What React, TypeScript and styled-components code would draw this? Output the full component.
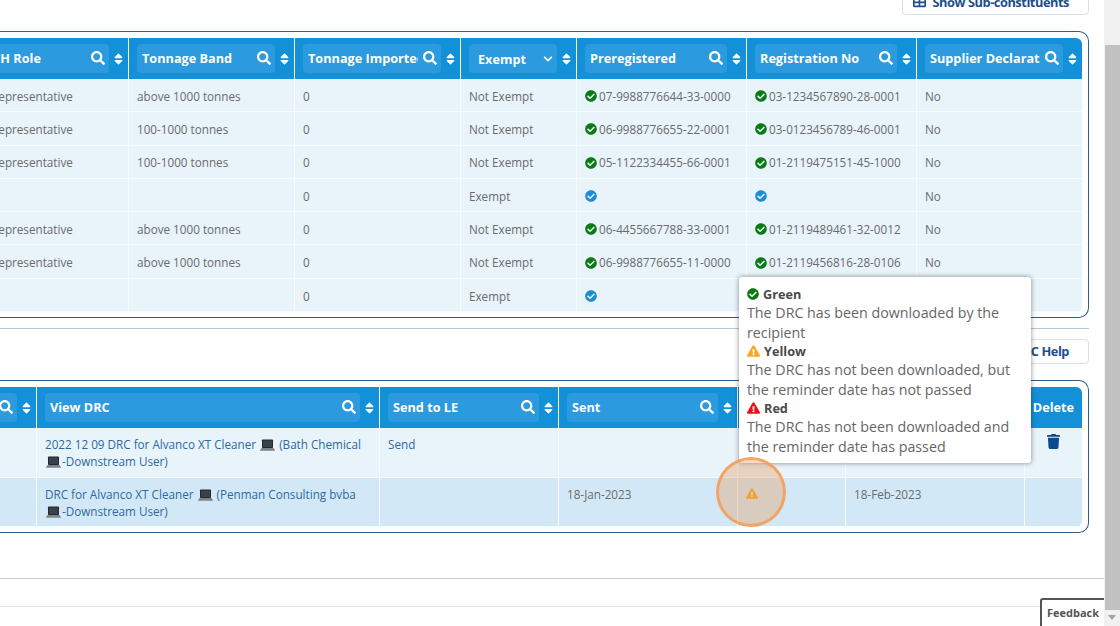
import React from "react"
import styled, { createGlobalStyle } from "styled-components"
import {
  FaCheckCircle,
  FaChevronDown,
  FaExclamationTriangle,
  FaQuestionCircle,
  FaSearch,
  FaSort,
  FaTable,
  FaTrash,
} from "react-icons/fa"

const GlobalStyle = createGlobalStyle`
  html, body {
    margin: 0;
    padding: 0;
    height: 100%;
    overflow: hidden;
    background: #fff;
    font-family: "Open Sans", "Liberation Sans", sans-serif;
  }
`

const Page = styled.div`
  position: relative;
  display: flex;
  width: 1120px;
  height: 626px;
  overflow: hidden;
`
const Content = styled.main`
  flex: 1;
  min-width: 0;
  display: flex;
  flex-direction: column;
  align-items: flex-end;
`
const ActionRow = styled.div`
  align-self: stretch;
  display: flex;
  justify-content: flex-end;
  padding-right: 15px;
`
const ActionButton = styled.button<{ $top: number }>`
  display: flex;
  align-items: center;
  gap: 7px;
  box-sizing: border-box;
  height: 25px;
  margin-top: ${(p) => p.$top}px;
  padding: 0 19px 2px 10px;
  background: #fff;
  border: 1px solid #d6e0e8;
  border-radius: 4px;
  color: #1c4f8c;
  font-family: inherit;
  font-size: 12.8px;
  font-weight: 700;
  letter-spacing: -0.45px;
  white-space: nowrap;
`
const Panel = styled.section<{ $top: number }>`
  margin: ${(p) => p.$top}px 15px 0 0;
  padding: 6px 6px 5px 0;
  border: 1px solid #2c5f8a;
  border-left: 0;
  border-radius: 0 10px 10px 0;
`
const Table = styled.div`
  border-radius: 0 6px 6px 0;
  overflow: hidden;
`
const Row = styled.div<{ $columns: string; $height: number; $shade?: boolean }>`
  display: grid;
  grid-template-columns: ${(p) => p.$columns};
  height: ${(p) => p.$height}px;
  background: ${(p) => (p.$shade ? "#d3e8f6" : "#e8f3fa")};
  box-shadow: inset 0 -1px 0 #f6fbfe;
`
const HeaderRow = styled(Row)`
  background: #1290d8;
  box-shadow: none;
`
const HeaderCell = styled.div`
  display: flex;
  align-items: center;
  gap: 5px;
  padding: 0 5px 0 8px;
  border-left: 1px solid #fff;
  min-width: 0;
  &:first-child {
    border-left: 0;
  }
`
const Filter = styled.div<{ $select?: boolean }>`
  flex: 1;
  min-width: 0;
  display: flex;
  align-items: center;
  box-sizing: border-box;
  height: 29px;
  padding: ${(p) => (p.$select ? "0 4px 0 9px" : "0 4px 2px 5px")};
  background: #2b9ade;
  border-radius: 4px;
  color: #fff;
  font-size: 12.7px;
  font-weight: 700;
`
const FilterLabel = styled.span`
  flex: 1;
  min-width: 0;
  margin-right: 5px;
  overflow: hidden;
  white-space: nowrap;
`
const SortIcon = styled(FaSort)`
  flex: none;
  width: 9px;
  height: 14px;
  color: #fff;
`
const SearchIcon = styled(FaSearch)`
  flex: none;
  width: 14px;
  height: 14px;
  color: #fff;
`
const Chevron = styled(FaChevronDown)`
  flex: none;
  width: 10px;
  height: 10px;
  color: #fff;
`
const DeleteTitle = styled.div`
  display: flex;
  align-items: center;
  justify-content: center;
  padding-bottom: 2px;
  border-left: 1px solid #fff;
  color: #fff;
  font-size: 12.7px;
  font-weight: 700;
`
const Cell = styled.div<{ $tall?: boolean }>`
  display: flex;
  align-items: ${(p) => (p.$tall ? "flex-start" : "center")};
  gap: 2px;
  padding: ${(p) => (p.$tall ? "8px 8px 0" : "1px 8px 0")};
  border-left: 1px solid #f6fbfe;
  color: #6b6b6b;
  font-size: 11.7px;
  line-height: 16.5px;
  white-space: nowrap;
  min-width: 0;
  &:first-child {
    border-left: 0;
  }
`
const DocLink = styled.a`
  display: block;
  color: #2d6aa3;
  white-space: normal;
`
const LaptopSvg = styled.svg`
  width: 15px;
  height: 12px;
  margin: 0 1px;
  vertical-align: -2px;
`
const StatusIcon = styled(FaCheckCircle)<{ $tone: "green" | "blue" }>`
  flex: none;
  width: 12px;
  height: 12px;
  color: ${(p) => (p.$tone === "green" ? "#0a7a14" : "#1a8cd8")};
`
const Warning = styled(FaExclamationTriangle)<{ $tone: "amber" | "red" }>`
  flex: none;
  width: 13px;
  height: 12px;
  color: ${(p) => (p.$tone === "amber" ? "#f7a823" : "#e8101c")};
`
const CellWarning = styled(Warning)`
  width: 12px;
  height: 11px;
  margin-top: 2px;
`
const Trash = styled(FaTrash)`
  width: 13px;
  height: 15px;
  margin: -2px 0 0 14px;
  color: #0b4a8f;
`
const Divider = styled.hr<{ $color: string; $top: number; $inset?: number }>`
  align-self: stretch;
  height: 1px;
  margin: ${(p) => p.$top}px ${(p) => p.$inset ?? 0}px 0 0;
  border: 0;
  background: ${(p) => p.$color};
`
const ScrollTrack = styled.aside`
  flex: none;
  display: flex;
  flex-direction: column;
  align-items: center;
  width: 16px;
  background: #f1f1f1;
`
const ScrollThumb = styled.div`
  width: 15px;
  height: 565px;
  margin-top: 45px;
  margin-left: 1px;
  background: #c1c1c1;
`
const ScrollArrow = styled.div`
  margin-top: 5px;
  border-top: 5px solid #a3a3a3;
  border-left: 4px solid transparent;
  border-right: 4px solid transparent;
`
const Tooltip = styled.div`
  position: absolute;
  left: 739px;
  top: 277px;
  box-sizing: border-box;
  width: 292px;
  height: 186px;
  padding: 9px 8px 6px;
  background: #fff;
  border-radius: 3px;
  box-shadow: 0 0 5px rgba(0, 0, 0, 0.45);
  color: #666;
  font-size: 14.25px;
  line-height: 20px;
`
const TooltipTitle = styled.div`
  display: flex;
  align-items: center;
  gap: 4px;
  box-sizing: border-box;
  height: 17px;
  padding-bottom: 2px;
  color: #4a4a4a;
  font-size: 12.7px;
  font-weight: 700;
`
const Highlight = styled.div`
  position: absolute;
  left: 716px;
  top: 457px;
  box-sizing: border-box;
  width: 70px;
  height: 70px;
  border: 3px solid rgba(245, 158, 85, 0.85);
  border-radius: 50%;
  background: rgba(228, 150, 85, 0.35);
`
const Feedback = styled.div`
  position: absolute;
  left: 1040px;
  top: 598px;
  box-sizing: border-box;
  width: 64px;
  height: 30px;
  padding: 6px 0 0 5px;
  background: #fff;
  border: 2px solid #555;
  border-width: 2px 0 0 2px;
  border-radius: 3px 0 0 0;
  color: #555;
  font-size: 11px;
  font-weight: 700;
  line-height: 14px;
`

const upperColumns = "173px 166px 166px 116px 170px 170px 166px"
const lowerColumns = "130px 343px 179px 179px 108px 179px 58px"

const upperHeaders = [
  "REACH Role",
  "Tonnage Band",
  "Tonnage Imported",
  "Exempt",
  "Preregistered",
  "Registration No",
  "Supplier Declaration",
]
const lowerHeaders = ["Status", "View DRC", "Send to LE", "Sent", "Downloaded", "Reminder"]

const substances = [
  ["Only Representative", "above 1000 tonnes", "Not Exempt", "07-9988776644-33-0000", "03-1234567890-28-0001"],
  ["Only Representative", "100-1000 tonnes", "Not Exempt", "06-9988776655-22-0001", "03-0123456789-46-0001"],
  ["Only Representative", "100-1000 tonnes", "Not Exempt", "05-1122334455-66-0001", "01-2119475151-45-1000"],
  ["", "", "Exempt", "", ""],
  ["Only Representative", "above 1000 tonnes", "Not Exempt", "06-4455667788-33-0001", "01-2119489461-32-0012"],
  ["Only Representative", "above 1000 tonnes", "Not Exempt", "06-9988776655-11-0000", "01-2119456816-28-0106"],
  ["", "", "Exempt", "", ""],
]

const Laptop = (): JSX.Element => (
  <LaptopSvg viewBox="0 0 15 12">
    <rect x="2" y="0.5" width="11" height="8.5" rx="0.8" fill="#23282e" />
    <rect x="3" y="1.5" width="9" height="6.5" fill="#39414a" />
    <path d="M1.5 9h12l1.5 2.2c0 .4-.2.6-.6.6H.6c-.4 0-.6-.2-.6-.6z" fill="#7d8389" />
  </LaptopSvg>
)

const RegistrationCell = ({ value }: { value: string }): JSX.Element => (
  <Cell>
    <StatusIcon $tone={value ? "green" : "blue"} />
    {value}
  </Cell>
)

const FilterHeader = ({ label }: { label: string }): JSX.Element => (
  <HeaderCell>
    <Filter $select={label === "Exempt"}>
      <FilterLabel>{label}</FilterLabel>
      {label === "Exempt" ? <Chevron /> : <SearchIcon />}
    </Filter>
    <SortIcon />
  </HeaderCell>
)

export default function App(): JSX.Element {
  return (
    <Page>
      <GlobalStyle />
      <Content>
        <ActionRow>
          <ActionButton $top={-10}>
            <FaTable size={13} />
            Show Sub-constituents
          </ActionButton>
        </ActionRow>
        <Panel $top={16}>
          <Table>
            <HeaderRow $columns={upperColumns} $height={41}>
              {upperHeaders.map((label) => (
                <FilterHeader key={label} label={label} />
              ))}
            </HeaderRow>
            {substances.map((row, idx) => (
              <Row key={idx} $columns={upperColumns} $height={33.3}>
                <Cell>{row[0]}</Cell>
                <Cell>{row[1]}</Cell>
                <Cell>0</Cell>
                <Cell>{row[2]}</Cell>
                <RegistrationCell value={row[3]} />
                <RegistrationCell value={row[4]} />
                <Cell>No</Cell>
              </Row>
            ))}
          </Table>
        </Panel>
        <Divider $color="#b5c7d3" $top={10} $inset={15} />
        <ActionRow>
          <ActionButton $top={10}>
            <FaQuestionCircle size={13} />
            DRC Help
          </ActionButton>
        </ActionRow>
        <Panel $top={16}>
          <Table>
            <HeaderRow $columns={lowerColumns} $height={41}>
              {lowerHeaders.map((label) => (
                <FilterHeader key={label} label={label} />
              ))}
              <DeleteTitle>Delete</DeleteTitle>
            </HeaderRow>
            <Row $columns={lowerColumns} $height={50}>
              <Cell $tall />
              <Cell $tall>
                <DocLink>
                  2022 12 09 DRC for Alvanco XT Cleaner <Laptop /> (Bath Chemical <Laptop />
                  -Downstream User)
                </DocLink>
              </Cell>
              <Cell $tall>
                <DocLink>Send</DocLink>
              </Cell>
              <Cell $tall />
              <Cell $tall />
              <Cell $tall />
              <Cell $tall>
                <Trash />
              </Cell>
            </Row>
            <Row $columns={lowerColumns} $height={49} $shade>
              <Cell $tall />
              <Cell $tall>
                <DocLink>
                  DRC for Alvanco XT Cleaner <Laptop /> (Penman Consulting bvba <Laptop />
                  -Downstream User)
                </DocLink>
              </Cell>
              <Cell $tall />
              <Cell $tall>18-Jan-2023</Cell>
              <Cell $tall>
                <CellWarning $tone="amber" />
              </Cell>
              <Cell $tall>18-Feb-2023</Cell>
              <Cell $tall />
            </Row>
          </Table>
        </Panel>
        <Divider $color="#cfcfcf" $top={45} />
        <Divider $color="#e4e4e4" $top={27} />
      </Content>
      <ScrollTrack>
        <ScrollThumb />
        <ScrollArrow />
      </ScrollTrack>
      <Tooltip>
        <TooltipTitle>
          <StatusIcon $tone="green" /> Green
        </TooltipTitle>
        The DRC has been downloaded by the recipient
        <TooltipTitle>
          <Warning $tone="amber" /> Yellow
        </TooltipTitle>
        The DRC has not been downloaded, but the reminder date has not passed
        <TooltipTitle>
          <Warning $tone="red" /> Red
        </TooltipTitle>
        The DRC has not been downloaded and the reminder date has passed
      </Tooltip>
      <Highlight />
      <Feedback>Feedback</Feedback>
    </Page>
  )
}
